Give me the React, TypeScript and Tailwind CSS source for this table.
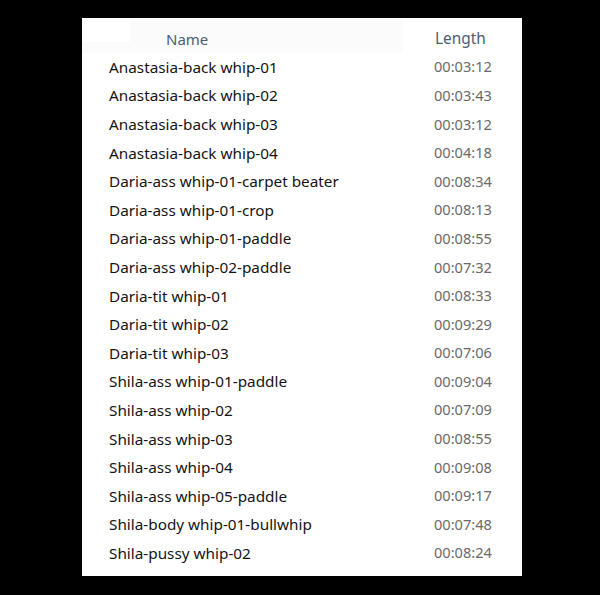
import React from "react";

const rows: [string, string][] = [
  ["Anastasia-back whip-01", "00:03:12"],
  ["Anastasia-back whip-02", "00:03:43"],
  ["Anastasia-back whip-03", "00:03:12"],
  ["Anastasia-back whip-04", "00:04:18"],
  ["Daria-ass whip-01-carpet beater", "00:08:34"],
  ["Daria-ass whip-01-crop", "00:08:13"],
  ["Daria-ass whip-01-paddle", "00:08:55"],
  ["Daria-ass whip-02-paddle", "00:07:32"],
  ["Daria-tit whip-01", "00:08:33"],
  ["Daria-tit whip-02", "00:09:29"],
  ["Daria-tit whip-03", "00:07:06"],
  ["Shila-ass whip-01-paddle", "00:09:04"],
  ["Shila-ass whip-02", "00:07:09"],
  ["Shila-ass whip-03", "00:08:55"],
  ["Shila-ass whip-04", "00:09:08"],
  ["Shila-ass whip-05-paddle", "00:09:17"],
  ["Shila-body whip-01-bullwhip", "00:07:48"],
  ["Shila-pussy whip-02", "00:08:24"],
];

export default function App() {
  return (
    <div className="w-[600px] h-[595px] bg-black overflow-hidden pt-[18px]" style={{ fontFamily: '"Noto Sans", sans-serif' }}>
      <div className="ml-[82px] w-[440px] h-[558px] bg-white">
        {/* header */}
        <div className="flex h-[35px] bg-[#fbfbfb] text-[15px] text-[#4d5d73]">
          <div className="w-[48px] h-[24px] bg-white" />
          <div className="flex-1 pl-[36px] pt-[10px] leading-[22px]">Name</div>
          <div className="w-[119px] bg-white pt-[10px] pl-[32px] text-[15.4px] leading-[22px]">Length</div>
        </div>
        {/* rows */}
        <div className="flex flex-col">
          {rows.map(([name, len], i) => (
            <div key={i} className="flex items-center h-[28.6px]">
              <div className="flex-1 pl-[27px] text-[15.3px] text-[#141414] whitespace-nowrap">{name}</div>
              <div className="w-[119px] pl-[31px] text-[14.6px] text-[#6a6a6a]">{len}</div>
            </div>
          ))}
        </div>
      </div>
    </div>
  );
}
